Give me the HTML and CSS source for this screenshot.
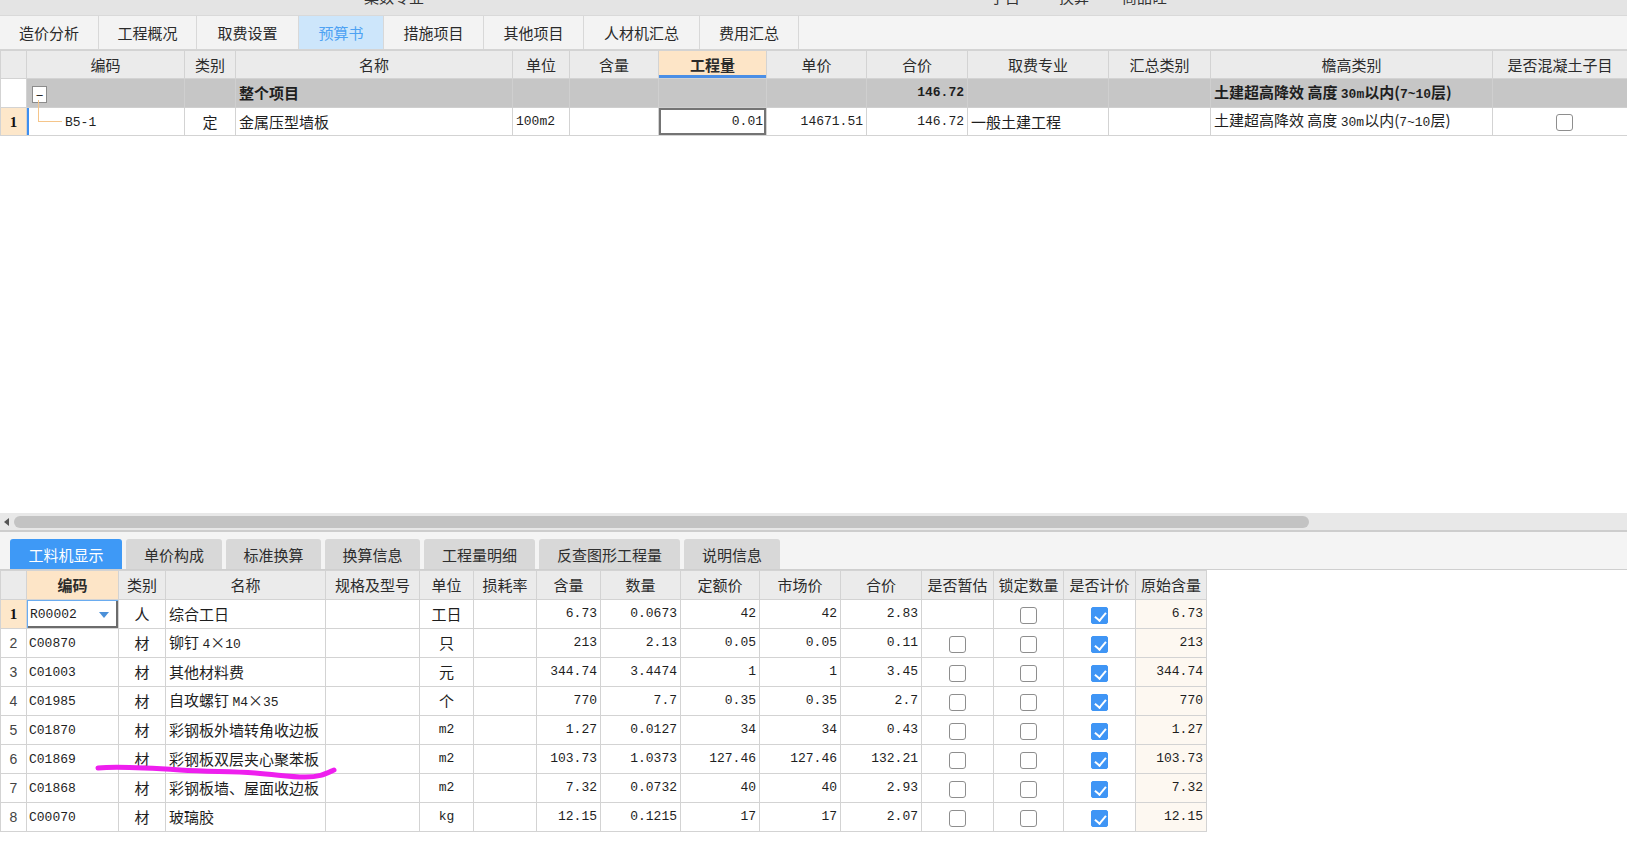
FILE: index.html
```html
<!DOCTYPE html>
<html lang="zh-CN">
<head>
<meta charset="utf-8">
<title>预算书</title>
<link rel="stylesheet" href="styles.css">
</head>
<body>
<div class="app">
  <div class="topbar">
    <span class="clip t1">案数专业</span>
    <span class="clip t2">子目</span>
    <span class="clip t3">换算</span>
    <span class="clip t4">商品砼</span>
  </div>

  <div class="tabs">
    <div class="tab tw1">造价分析</div>
    <div class="tab tw2">工程概况</div>
    <div class="tab tw3">取费设置</div>
    <div class="tab tw4 active">预算书</div>
    <div class="tab tw5">措施项目</div>
    <div class="tab tw6">其他项目</div>
    <div class="tab tw7">人材机汇总</div>
    <div class="tab tw8">费用汇总</div>
    <div class="tab-rest"></div>
  </div>

  <div class="upper">
    <table class="grid top">
      <colgroup>
        <col class="c26"><col class="c158"><col class="c51"><col class="c277"><col class="c57"><col class="c89"><col class="c108"><col class="c100"><col class="c101"><col class="c141"><col class="c102"><col class="c282"><col class="c135">
      </colgroup>
      <tr class="hrow">
        <th></th><th>编码</th><th>类别</th><th>名称</th><th>单位</th><th>含量</th><th class="hl-blue">工程量</th><th>单价</th><th>合价</th><th>取费专业</th><th>汇总类别</th><th>檐高类别</th><th>是否混凝土子目</th>
      </tr>
      <tr class="grow">
        <td class="rn-blank"></td>
        <td><span class="collapse">−</span></td>
        <td></td>
        <td class="b">整个项目</td>
        <td></td><td></td><td></td><td></td>
        <td class="n b">146.72</td>
        <td></td><td></td>
        <td class="b">土建超高降效 高度 <span class="mb">30m</span>以内(<span class="mb">7~10</span>层)</td>
        <td></td>
      </tr>
      <tr class="drow">
        <td class="rn sel">1</td>
        <td class="code selbar treecell"><span class="tree"></span><span class="m">B5-1</span></td>
        <td class="c">定</td>
        <td>金属压型墙板</td>
        <td class="m">100m2</td>
        <td></td>
        <td class="n edit">0.01</td>
        <td class="n">14671.51</td>
        <td class="n">146.72</td>
        <td>一般土建工程</td>
        <td></td>
        <td>土建超高降效 高度 <span class="m">30m</span>以内(<span class="m">7~10</span>层)</td>
        <td class="c cbcell"><span class="cb"></span></td>
      </tr>
    </table>
  </div>

  <div class="hscroll">
    <span class="arrow"></span>
    <div class="thumb"></div>
  </div>

  <div class="lower">
    <div class="btabs">
      <div class="btab bw1 active">工料机显示</div>
      <div class="btab bw2">单价构成</div>
      <div class="btab bw3">标准换算</div>
      <div class="btab bw4">换算信息</div>
      <div class="btab bw5">工程量明细</div>
      <div class="btab bw6">反查图形工程量</div>
      <div class="btab bw7">说明信息</div>
    </div>

    <table class="grid bottom">
      <colgroup>
        <col class="c26"><col class="c92"><col class="c47"><col class="c160"><col class="c94"><col class="c54"><col class="c63"><col class="c64"><col class="c80"><col class="c79"><col class="c81"><col class="c81"><col class="c72"><col class="c70"><col class="c72"><col class="c71">
      </colgroup>
      <tr class="hrow">
        <th></th><th class="hl b">编码</th><th>类别</th><th>名称</th><th>规格及型号</th><th>单位</th><th>损耗率</th><th>含量</th><th>数量</th><th>定额价</th><th>市场价</th><th>合价</th><th>是否暂估</th><th>锁定数量</th><th>是否计价</th><th>原始含量</th>
      </tr>
      <tr class="brow">
        <td class="rn sel">1</td>
        <td class="code dd"><span class="m">R00002</span><span class="tri"></span></td>
        <td class="c">人</td><td>综合工日</td><td></td><td class="c">工日</td><td></td>
        <td class="n">6.73</td><td class="n">0.0673</td><td class="n">42</td><td class="n">42</td><td class="n">2.83</td>
        <td class="c"></td><td class="c"><span class="cb"></span></td><td class="c"><span class="cb on"></span></td><td class="n orig">6.73</td>
      </tr>
      <tr class="brow">
        <td class="rn">2</td>
        <td class="code"><span class="m">C00870</span></td>
        <td class="c">材</td><td>铆钉 <span class="m">4</span>×<span class="m">10</span></td><td></td><td class="c">只</td><td></td>
        <td class="n">213</td><td class="n">2.13</td><td class="n">0.05</td><td class="n">0.05</td><td class="n">0.11</td>
        <td class="c"><span class="cb"></span></td><td class="c"><span class="cb"></span></td><td class="c"><span class="cb on"></span></td><td class="n orig">213</td>
      </tr>
      <tr class="brow">
        <td class="rn">3</td>
        <td class="code"><span class="m">C01003</span></td>
        <td class="c">材</td><td>其他材料费</td><td></td><td class="c">元</td><td></td>
        <td class="n">344.74</td><td class="n">3.4474</td><td class="n">1</td><td class="n">1</td><td class="n">3.45</td>
        <td class="c"><span class="cb"></span></td><td class="c"><span class="cb"></span></td><td class="c"><span class="cb on"></span></td><td class="n orig">344.74</td>
      </tr>
      <tr class="brow">
        <td class="rn">4</td>
        <td class="code"><span class="m">C01985</span></td>
        <td class="c">材</td><td>自攻螺钉 <span class="m">M4</span>×<span class="m">35</span></td><td></td><td class="c">个</td><td></td>
        <td class="n">770</td><td class="n">7.7</td><td class="n">0.35</td><td class="n">0.35</td><td class="n">2.7</td>
        <td class="c"><span class="cb"></span></td><td class="c"><span class="cb"></span></td><td class="c"><span class="cb on"></span></td><td class="n orig">770</td>
      </tr>
      <tr class="brow">
        <td class="rn">5</td>
        <td class="code"><span class="m">C01870</span></td>
        <td class="c">材</td><td>彩钢板外墙转角收边板</td><td></td><td class="c m">m2</td><td></td>
        <td class="n">1.27</td><td class="n">0.0127</td><td class="n">34</td><td class="n">34</td><td class="n">0.43</td>
        <td class="c"><span class="cb"></span></td><td class="c"><span class="cb"></span></td><td class="c"><span class="cb on"></span></td><td class="n orig">1.27</td>
      </tr>
      <tr class="brow">
        <td class="rn">6</td>
        <td class="code"><span class="m">C01869</span></td>
        <td class="c">材</td><td>彩钢板双层夹心聚苯板</td><td></td><td class="c m">m2</td><td></td>
        <td class="n">103.73</td><td class="n">1.0373</td><td class="n">127.46</td><td class="n">127.46</td><td class="n">132.21</td>
        <td class="c"><span class="cb"></span></td><td class="c"><span class="cb"></span></td><td class="c"><span class="cb on"></span></td><td class="n orig">103.73</td>
      </tr>
      <tr class="brow">
        <td class="rn">7</td>
        <td class="code"><span class="m">C01868</span></td>
        <td class="c">材</td><td>彩钢板墙、屋面收边板</td><td></td><td class="c m">m2</td><td></td>
        <td class="n">7.32</td><td class="n">0.0732</td><td class="n">40</td><td class="n">40</td><td class="n">2.93</td>
        <td class="c"><span class="cb"></span></td><td class="c"><span class="cb"></span></td><td class="c"><span class="cb on"></span></td><td class="n orig">7.32</td>
      </tr>
      <tr class="brow">
        <td class="rn">8</td>
        <td class="code"><span class="m">C00070</span></td>
        <td class="c">材</td><td>玻璃胶</td><td></td><td class="c m">kg</td><td></td>
        <td class="n">12.15</td><td class="n">0.1215</td><td class="n">17</td><td class="n">17</td><td class="n">2.07</td>
        <td class="c"><span class="cb"></span></td><td class="c"><span class="cb"></span></td><td class="c"><span class="cb on"></span></td><td class="n orig">12.15</td>
      </tr>
    </table>
  </div>

  <svg class="scribble" width="1627" height="848" viewBox="0 0 1627 848">
    <path d="M98 768 C 120 766, 150 768, 180 770 S 230 771, 255 773 S 290 777, 305 777 S 325 774, 334 770" fill="none" stroke="#ee1fee" stroke-width="5" stroke-linecap="round" stroke-linejoin="round"/>
  </svg>
</div>
</body>
</html>
```

FILE: styles.css
```css
* { box-sizing: border-box; }

body {
  margin: 0;
  background: #ffffff;
  font-family: "Noto Sans CJK SC", "Noto Sans", sans-serif;
  font-size: 15px;
  color: #222;
}

.app {
  width: 1627px;
  height: 848px;
  overflow: hidden;
  position: relative;
  background: #ffffff;
}

/* top clipped bar */
.topbar {
  height: 15px;
  background: #e4e4e4;
  display: flex;
  align-items: flex-start;
  overflow: hidden;
}
.clip {
  display: block;
  line-height: 16px;
  margin-top: -11px;
  color: #333;
  font-size: 15px;
}
.t1 { margin-left: 364px; }
.t2 { margin-left: 566px; }
.t3 { margin-left: 39px; }
.t4 { margin-left: 33px; }

/* main tabs */
.tabs {
  height: 35px;
  display: flex;
  background: #f4f4f4;
  border-top: 1px solid #d9d9d9;
  border-bottom: 1px solid #d4d4d4;
}
.tab {
  display: flex;
  align-items: center;
  justify-content: center;
  border-right: 1px solid #d8d8d8;
  color: #2a2a2a;
  font-size: 15px;
  background: #f3f3f3;
}
.tab.active { background: #cde6fb; color: #4ea2f3; }
.tw1 { width: 99px; }
.tw2 { width: 98px; }
.tw3 { width: 102px; }
.tw4 { width: 85px; }
.tw5 { width: 100px; }
.tw6 { width: 100px; }
.tw7 { width: 116px; }
.tw8 { width: 99px; }
.tab-rest { flex: 1; }

/* grids */
.grid {
  border-collapse: collapse;
  table-layout: fixed;
}
.grid th, .grid td {
  border: 1px solid #d3d3d3;
  padding: 0 3px;
  white-space: nowrap;
  overflow: hidden;
  vertical-align: middle;
  line-height: 18px;
}
.grid th {
  background: #ebebeb;
  font-weight: normal;
  color: #2b2b2b;
  text-align: center;
  font-size: 15px;
}
.grid td { font-size: 15px; color: #1e1e1e; text-align: left; }

.c26 { width: 26px; } .c158 { width: 158px; } .c51 { width: 51px; } .c277 { width: 277px; }
.c57 { width: 57px; } .c89 { width: 89px; } .c108 { width: 108px; } .c100 { width: 100px; }
.c101 { width: 101px; } .c141 { width: 141px; } .c102 { width: 102px; } .c282 { width: 282px; }
.c135 { width: 135px; }
.c92 { width: 92px; } .c47 { width: 47px; } .c160 { width: 160px; } .c94 { width: 94px; }
.c54 { width: 54px; } .c63 { width: 63px; } .c64 { width: 64px; } .c80 { width: 80px; }
.c79 { width: 79px; } .c81 { width: 81px; } .c72 { width: 72px; } .c70 { width: 70px; }
.c71 { width: 71px; }

/* upper area */
.upper {
  height: 463px;
  overflow: hidden;
  background: #fff;
}
.top { width: 1627px; }
.top .hrow { height: 28px; }
.top .grow { height: 29px; }
.top .drow { height: 28px; }
.grow td { background: #c6c6c6; border-color: #cfcfcf; }
.grow td.rn-blank { background: #ffffff; border-color: #d3d3d3; }

.grid th.hl-blue {
  background: #fde5c7;
  font-weight: bold;
  box-shadow: inset 0 -3px 0 #4b8fe6;
}
.grid th.hl { background: #fde5c7; }
.grid th.b, .grid td.b { font-weight: bold; }
.grid td.c { text-align: center; }
.grid td.n {
  text-align: right;
  font-family: "Liberation Mono", monospace;
  font-size: 13px;
  padding-right: 3px;
}
.grid td.m, .m { font-family: "Liberation Mono", monospace; font-size: 13px; }
.mb { font-family: "Liberation Mono", monospace; font-size: 13px; font-weight: bold; }

.grid td.rn {
  text-align: center;
  color: #444;
  font-family: "Liberation Sans", sans-serif;
  font-size: 14px;
  padding: 0;
}
.grid td.rn.sel {
  background: #fde7ca;
  color: #111;
  font-family: "Liberation Serif", serif;
  font-weight: bold;
  font-size: 15px;
}
.selbar { box-shadow: inset 2px 0 0 #3d8ef0; }

.collapse {
  display: inline-flex;
  align-items: center;
  justify-content: center;
  width: 15px;
  height: 17px;
  border: 1px solid #8c8c8c;
  background: #fff;
  font-size: 13px;
  line-height: 1;
  color: #222;
  margin-left: 2px;
  vertical-align: middle;
}

.code { position: relative; }
.code .m { vertical-align: middle; }
.grid td.treecell { overflow: visible; padding-left: 38px; }
.tree {
  position: absolute;
  left: 11px;
  top: -8px;
  width: 24px;
  height: 22px;
  border-left: 1px solid #f5c58a;
  border-bottom: 1px solid #f5c58a;
}

.edit { box-shadow: inset 0 0 0 2px #747474; }
.grid td.cbcell { padding-left: 12px; }

/* checkboxes */
.cb {
  display: inline-block;
  width: 17px;
  height: 17px;
  border: 1px solid #8e8e8e;
  border-radius: 3px;
  background: #fff;
  vertical-align: middle;
  position: relative;
}
.cb.on {
  background: #3f95f5;
  border-color: #3f95f5;
  border-radius: 2px;
}
.cb.on::after {
  content: "";
  position: absolute;
  left: 5px;
  top: 2px;
  width: 5px;
  height: 9px;
  border-right: 2.5px solid #fff;
  border-bottom: 2.5px solid #fff;
  transform: rotate(40deg);
}

/* horizontal scrollbar */
.hscroll {
  height: 17px;
  background: #e8e8e8;
  display: flex;
  align-items: center;
  padding-left: 4px;
  gap: 5px;
}
.arrow {
  width: 0;
  height: 0;
  border-top: 4px solid transparent;
  border-bottom: 4px solid transparent;
  border-right: 5px solid #555;
}
.thumb {
  width: 1295px;
  height: 12px;
  background: #c3c3c3;
  border-radius: 6px;
}

/* lower panel */
.lower {
  border-top: 2px solid #cdcdcd;
}
.btabs {
  height: 38px;
  background: #f4f4f4;
  display: flex;
  align-items: flex-end;
  gap: 4px;
  padding-left: 10px;
  border-bottom: 1px solid #cfcfcf;
}
.btab {
  height: 30px;
  display: flex;
  align-items: center;
  justify-content: center;
  background: #d8d8d8;
  color: #2e2e2e;
  border-radius: 3px 3px 0 0;
  font-size: 15px;
}
.btab.active { background: #3e99f6; color: #ffffff; }
.bw1 { width: 112px; } .bw2 { width: 96px; } .bw3 { width: 95px; } .bw4 { width: 95px; }
.bw5 { width: 111px; } .bw6 { width: 141px; } .bw7 { width: 96px; }

.bottom { width: 1206px; }
.bottom .hrow { height: 29px; }
.bottom .brow { height: 29px; }
.bottom .code { padding-left: 2px; }
.grid td.orig { background: #fdf8f1; }

.dd {
  box-shadow: inset 1px 1px 0 #6aacf0, inset -2px -2px 0 #6c6c6c;
}
.dd .m { margin-left: 1px; }
.tri {
  position: absolute;
  right: 9px;
  top: 12px;
  width: 0;
  height: 0;
  border-left: 5px solid transparent;
  border-right: 5px solid transparent;
  border-top: 6px solid #4b90d8;
}

.scribble {
  position: absolute;
  left: 0;
  top: 0;
  pointer-events: none;
}
```
